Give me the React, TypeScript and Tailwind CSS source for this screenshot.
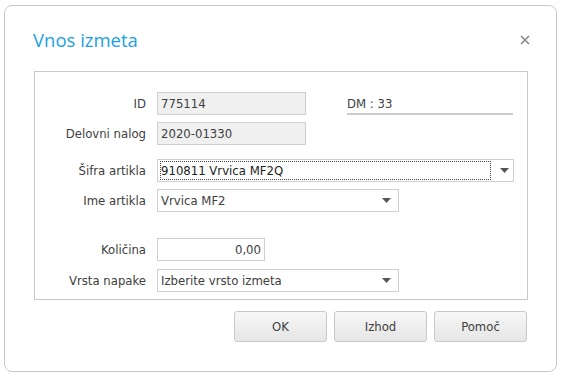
import React from "react";

const font = { fontFamily: "Tahoma, 'DejaVu Sans Condensed', 'DejaVu Sans', sans-serif" };

function Arrow() {
  return (
    <svg width="9" height="5" viewBox="0 0 9 5" className="block">
      <path d="M0 0 H9 L4.5 5 Z" fill="#555" />
    </svg>
  );
}

function Label({ children }: { children: React.ReactNode }) {
  return <div className="w-[111px] text-right text-[13px] text-[#404040] leading-none">{children}</div>;
}

export default function App() {
  return (
    <div className="w-[561px] h-[377px] bg-white pt-[5px] pl-[4px]" style={font}>
      <div className="w-[553px] h-[367px] border border-[#c9c9c9] rounded-[8px] bg-white flex flex-col">
        <div className="flex items-center justify-between h-[65px] pl-[28px] pr-[26px]">
          <div className="text-[18.5px] text-[#1ba1e2] pt-[2px]" style={{ fontFamily: "'Open Sans', 'Noto Sans', sans-serif" }}>
            Vnos izmeta
          </div>
          <svg width="10" height="10" viewBox="0 0 10 10" className="mt-[2px]">
            <path d="M1 1 L9 9 M9 1 L1 9" stroke="#8a8a8a" strokeWidth="1.6" />
          </svg>
        </div>
        <div className="ml-[29px] w-[494px] h-[229px] border border-[#c9c9c9] pt-[20px] flex flex-col">
          <div className="flex items-center h-[23px]">
            <Label>ID</Label>
            <div className="ml-[11px] w-[149px] h-[23px] border border-[#cfcfcf] bg-[#f0f0f0] flex items-center pl-[3px] text-[13px] text-[#404040]">
              775114
            </div>
            <div className="ml-[41px] w-[166px] h-[23px] flex flex-col justify-end">
              <div className="text-[13px] text-[#404040] pb-[3px] leading-none">DM : 33</div>
              <div className="h-[2px] bg-[#cdcdcd]" />
            </div>
          </div>
          <div className="flex items-center h-[23px] mt-[7px]">
            <Label>Delovni nalog</Label>
            <div className="ml-[11px] w-[149px] h-[23px] border border-[#cfcfcf] bg-[#f0f0f0] flex items-center pl-[3px] text-[13px] text-[#404040]">
              2020-01330
            </div>
          </div>
          <div className="flex items-center h-[23px] mt-[14px]">
            <Label>Šifra artikla</Label>
            <div className="ml-[11px] w-[357px] h-[23px] border border-[#cfcfcf] bg-white flex items-center p-[2px]">
              <div className="w-[331px] h-[19px] border border-dotted border-[#444] flex items-center text-[13px] text-[#222]">
                910811 Vrvica MF2Q
              </div>
              <div className="ml-[9px]">
                <Arrow />
              </div>
            </div>
          </div>
          <div className="flex items-center h-[23px] mt-[7px]">
            <Label>Ime artikla</Label>
            <div className="ml-[11px] w-[242px] h-[23px] border border-[#cfcfcf] bg-white flex items-center justify-between pl-[3px] pr-[7px] text-[13px] text-[#404040]">
              <span>Vrvica MF2</span>
              <Arrow />
            </div>
          </div>
          <div className="flex items-center h-[23px] mt-[26px]">
            <Label>Količina</Label>
            <div className="ml-[11px] w-[108px] h-[23px] border border-[#cfcfcf] bg-white flex items-center justify-end pr-[3px] text-[13px] text-[#404040]">
              0,00
            </div>
          </div>
          <div className="flex items-center h-[23px] mt-[8px]">
            <Label>Vrsta napake</Label>
            <div className="ml-[11px] w-[242px] h-[23px] border border-[#cfcfcf] bg-white flex items-center justify-between pl-[3px] pr-[7px] text-[13px] text-[#404040]">
              <span>Izberite vrsto izmeta</span>
              <Arrow />
            </div>
          </div>
        </div>
        <div className="flex justify-end gap-[7px] mr-[29px] mt-[11px]">
          {["OK", "Izhod", "Pomoč"].map((t) => (
            <div
              key={t}
              className="w-[93px] h-[31px] rounded-[3px] border border-[#c8c8c8] bg-gradient-to-b from-[#f7f7f7] to-[#e6e6e6] flex items-center justify-center text-[13px] text-[#404040]"
            >
              {t}
            </div>
          ))}
        </div>
      </div>
    </div>
  );
}
